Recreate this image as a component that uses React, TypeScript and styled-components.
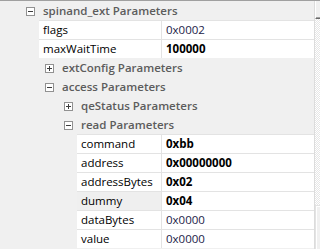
import React from "react";
import styled, { createGlobalStyle } from "styled-components";

const Global = createGlobalStyle`
  html, body { margin: 0; padding: 0; background: #f0f0f0; }
  body { font-family: "Open Sans", "Noto Sans", sans-serif; font-size: 11.5px; }
`;

const Frame = styled.div`
  width: 320px;
  height: 249px;
  display: flex;
  overflow: hidden;
  border-top: 1px solid #a0a0a0;
  box-sizing: border-box;
  background: #f0f0f0;
`;

const Grid = styled.div`
  width: 315px;
  display: flex;
  flex-direction: column;
  border-right: 1px solid #dcdcdc;
  box-sizing: border-box;
`;

const Row = styled.div`
  height: 19px;
  display: flex;
  flex-shrink: 0;
`;

const GroupRow = styled(Row)`
  align-items: center;
  padding-top: 1px;
  box-sizing: border-box;
`;

const Toggle = styled.span<{ $level: number }>`
  margin-left: ${(p) => 26 + p.$level * 19}px;
  width: 9px;
  height: 9px;
  box-sizing: border-box;
  border: 1px solid #919191;
  background: #fff;
  position: relative;
  flex-shrink: 0;
  &::before {
    content: "";
    position: absolute;
    left: 1px;
    top: 3px;
    width: 5px;
    height: 1px;
    background: #3c3c3c;
  }
`;

const PlusToggle = styled(Toggle)`
  &::after {
    content: "";
    position: absolute;
    left: 3px;
    top: 1px;
    width: 1px;
    height: 5px;
    background: #3c3c3c;
  }
`;

const GroupLabel = styled.span`
  margin-left: 8px;
  font-weight: 600;
  color: #5c5c5c;
  line-height: 18px;
  white-space: nowrap;
`;

const Cells = styled.div<{ $level: number }>`
  margin-left: ${(p) => 39 + (p.$level - 1) * 38}px;
  flex: 1;
  display: flex;
  border-top: 1px solid #e3e3e3;
`;

const NameCell = styled.div<{ $selected?: boolean }>`
  flex: 1;
  background: ${(p) => (p.$selected ? "#efefef" : "#ffffff")};
  color: #000;
  padding-left: 4px;
  line-height: 18px;
  white-space: nowrap;
  overflow: hidden;
`;

const ValueCell = styled.div<{ $bold?: boolean }>`
  width: 148px;
  flex-shrink: 0;
  border-left: 1px solid #e3e3e3;
  background: #fff;
  padding-left: 4px;
  line-height: 18px;
  font-weight: ${(p) => (p.$bold ? 700 : 400)};
  color: ${(p) => (p.$bold ? "#000" : "#1c1c48")};
  white-space: nowrap;
`;

const Scrollbar = styled.div`
  width: 5px;
  display: flex;
  flex-direction: column;
`;

const ScrollButton = styled.div`
  height: 18px;
  box-sizing: border-box;
  background: #f0f0f0;
  border-left: 1px solid #ffffff;
  border-bottom: 1px solid #6a6a6a;
  box-shadow: inset 0 -1px 0 #a0a0a0;
`;

const Track = styled.div`
  flex: 1;
  background-color: #ffffff;
  background-image: repeating-conic-gradient(#e6e6e6 0 25%, #ffffff 0 50%);
  background-size: 2px 2px;
`;

const Thumb = styled.div`
  height: 44px;
  box-sizing: border-box;
  background: #f0f0f0;
  border-top: 1px solid #e3e3e3;
  border-left: 1px solid #e3e3e3;
  box-shadow: inset 1px 1px 0 #ffffff;
`;

type Item =
  | { kind: "group"; level: number; label: string; open: boolean }
  | { kind: "prop"; level: number; name: string; value: string; bold?: boolean; selected?: boolean };

const items: Item[] = [
  { kind: "group", level: 0, label: "spinand_ext Parameters", open: true },
  { kind: "prop", level: 1, name: "flags", value: "0x0002" },
  { kind: "prop", level: 1, name: "maxWaitTime", value: "100000", bold: true },
  { kind: "group", level: 1, label: "extConfig Parameters", open: false },
  { kind: "group", level: 1, label: "access Parameters", open: true },
  { kind: "group", level: 2, label: "qeStatus Parameters", open: false },
  { kind: "group", level: 2, label: "read Parameters", open: true },
  { kind: "prop", level: 2, name: "command", value: "0xbb", bold: true },
  { kind: "prop", level: 2, name: "address", value: "0x00000000", bold: true },
  { kind: "prop", level: 2, name: "addressBytes", value: "0x02", bold: true },
  { kind: "prop", level: 2, name: "dummy", value: "0x04", bold: true, selected: true },
  { kind: "prop", level: 2, name: "dataBytes", value: "0x0000" },
  { kind: "prop", level: 2, name: "value", value: "0x0000" },
];

export default function App() {
  return (
    <>
      <Global />
      <Frame>
        <Grid>
          {items.map((it, i) =>
            it.kind === "group" ? (
              <GroupRow key={i}>
                {it.open ? <Toggle $level={it.level} /> : <PlusToggle $level={it.level} />}
                <GroupLabel>{it.label}</GroupLabel>
              </GroupRow>
            ) : (
              <Row key={i}>
                <Cells $level={it.level}>
                  <NameCell $selected={it.selected}>{it.name}</NameCell>
                  <ValueCell $bold={it.bold}>{it.value}</ValueCell>
                </Cells>
              </Row>
            )
          )}
        </Grid>
        <Scrollbar>
          <ScrollButton />
          <Track />
          <Thumb />
        </Scrollbar>
      </Frame>
    </>
  );
}
